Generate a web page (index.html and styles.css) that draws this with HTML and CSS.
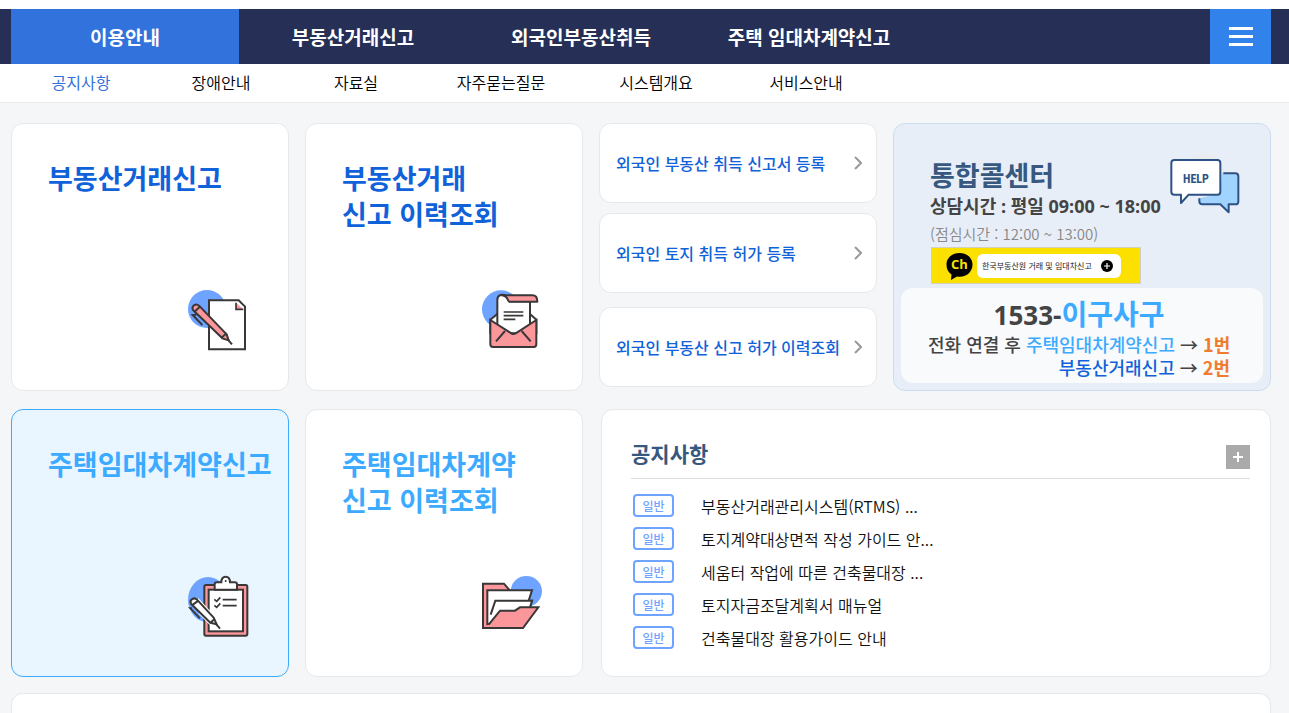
FILE: index.html
```html
<!DOCTYPE html>
<html lang="ko">
<head>
<meta charset="utf-8">
<title>부동산거래관리시스템</title>
<meta name="viewport" content="width=device-width, initial-scale=1">
<link rel="stylesheet" href="styles.css">
</head>
<body>
<div class="page">
  <header>
    <nav class="gnb">
      <ul class="gnb-list">
        <li><a class="active" href="#guide">이용안내</a></li>
        <li><a href="#deal">부동산거래신고</a></li>
        <li><a href="#foreign">외국인부동산취득</a></li>
        <li><a href="#lease">주택 임대차계약신고</a></li>
      </ul>
      <button class="menu-button" type="button" aria-label="전체메뉴"><span></span><span></span><span></span></button>
    </nav>
    <nav class="subnav">
      <ul class="subnav-list">
        <li><a class="active" href="#notice">공지사항</a></li>
        <li><a href="#trouble">장애안내</a></li>
        <li><a href="#data">자료실</a></li>
        <li><a href="#faq">자주묻는질문</a></li>
        <li><a href="#system">시스템개요</a></li>
        <li><a href="#service">서비스안내</a></li>
      </ul>
    </nav>
  </header>

  <main class="main">
    <div class="row-top">
      <a class="card tile" href="#deal-report">
        <span class="tile-title">부동산거래신고</span>
        <svg class="tile-icon" viewBox="24 30 180 180" aria-hidden="true">
          <circle cx="81" cy="87" r="57" fill="#6ea4ff"/>
          <path d="M87 61H176L195 80V208H87Z" fill="#fff" stroke="#393738" stroke-width="6"/>
          <path d="M168 68V88H190" fill="#fb969b" stroke="#393738" stroke-width="5"/>
          <path d="M39 90C33 78 47 68 57 77L140 163L146 181L127 175Z" fill="#fb969b" stroke="#393738" stroke-width="6" stroke-linejoin="round"/>
          <path d="M43 96L61 79M124 173L140 160M143 178L156 193M49 104L38 105L67 135" fill="none" stroke="#393738" stroke-width="6"/>
        </svg>
      </a>
      <a class="card tile" href="#deal-history">
        <span class="tile-title">부동산거래<br>신고 이력조회</span>
        <svg class="tile-icon" viewBox="36 30 180 180" aria-hidden="true">
          <circle cx="93" cy="88" r="57" fill="#6ea4ff"/>
          <path d="M61 119L82 102H180L199 119V160H61Z" fill="#fff" stroke="#393738" stroke-width="6"/>
          <path d="M82 160V59C82 43 99 42 109 48L118 64H180V160Z" fill="#fff" stroke="#393738" stroke-width="6"/>
          <path d="M96 46H187C197 46 202 54 202 65H118C112 65 116 48 96 46Z" fill="#fb969b" stroke="#393738" stroke-width="6" stroke-linejoin="round"/>
          <path d="M101 96H160M101 107H160M101 118H136" stroke="#393738" stroke-width="5"/>
          <path d="M61 120L124 160Q130 164 137 160L199 120V193Q199 201 191 201H69Q61 201 61 193Z" fill="#fb969b" stroke="#393738" stroke-width="6"/>
          <path d="M105 153L78 184M155 153L182 184" stroke="#393738" stroke-width="6"/>
        </svg>
      </a>
      <ul class="link-list">
        <li><a class="card link-card" href="#f1">외국인 부동산 취득 신고서 등록
          <svg viewBox="0 0 8 14" aria-hidden="true"><path d="M1 1L7 7L1 13"/></svg></a></li>
        <li><a class="card link-card" href="#f2">외국인 토지 취득 허가 등록
          <svg viewBox="0 0 8 14" aria-hidden="true"><path d="M1 1L7 7L1 13"/></svg></a></li>
        <li><a class="card link-card" href="#f3">외국인 부동산 신고 허가 이력조회
          <svg viewBox="0 0 8 14" aria-hidden="true"><path d="M1 1L7 7L1 13"/></svg></a></li>
      </ul>
      <section class="card call">
        <div class="call-head">
          <div>
            <h2>통합콜센터</h2>
            <p class="call-hours">상담시간 : 평일 09:00 ~ 18:00</p>
            <p class="call-lunch">(점심시간 : 12:00 ~ 13:00)</p>
          </div>
          <svg class="help-icon" viewBox="30 6 210 186" aria-hidden="true">
            <circle cx="136" cy="69" r="58" fill="#e9ebee"/>
            <path d="M186 70H226Q235 70 235 79V155Q235 163 226 163H206V187L181 163H127Q118 163 118 154V145L182 130Z" fill="#a1d3ff"/>
            <path d="M190 70H226Q235 70 235 79V155Q235 163 226 163H206V187L181 163H127Q118 163 118 154V145" fill="none" stroke="#2e5285" stroke-width="6" stroke-linejoin="round"/>
            <path d="M43 30H172Q181 30 181 39V125Q181 134 172 134H86L63 159V134H43Q34 134 34 125V39Q34 30 43 30Z" fill="#fff" stroke="#2e5285" stroke-width="6" stroke-linejoin="round"/>
            <text class="help-text" x="108" y="98" text-anchor="middle">HELP</text>
          </svg>
        </div>
        <a class="kakao" href="#kakao">
          <svg class="kakao-mark" viewBox="0 0 27 28" aria-hidden="true">
            <path d="M13.500 1C6 1 .5 6 .5 12.500C.5 17 2 20 5.500 22.500L5 28L11 24.500C20 26 26.500 20 26.500 12.500C26.500 6 21 1 13.500 1Z" fill="#000"/>
            <text class="kakao-ch" x="13.500" y="17" text-anchor="middle">Ch</text>
          </svg>
          <span class="kakao-pill">한국부동산원 거래 및 임대차신고
            <svg viewBox="0 0 12 12" aria-hidden="true"><circle cx="6" cy="6" r="6"/><path d="M6 3V9M3 6H9" stroke="#fff" stroke-width="1.200"/></svg>
          </span>
        </a>
        <div class="phone">
          <p class="phone-number">1533-<span>이구사구</span></p>
          <div class="phone-lines">
            <p>전화 연결 후 <span class="sky">주택임대차계약신고</span> → <span class="orange">1번</span></p>
            <p><span class="blue">부동산거래신고</span> → <span class="orange">2번</span></p>
          </div>
        </div>
      </section>
    </div>

    <div class="row-bottom">
      <div class="tile-pair">
        <a class="card tile lease selected" href="#lease-report">
          <span class="tile-title">주택임대차계약신고</span>
          <svg class="tile-icon" viewBox="24 33 180 180" aria-hidden="true">
            <ellipse cx="84" cy="104" rx="60" ry="68" fill="#6ea4ff"/>
            <rect x="73" y="60" width="129" height="152" rx="5" fill="#fb969b" stroke="#393738" stroke-width="6"/>
            <rect x="86" y="74" width="103" height="125" fill="#fff" stroke="#393738" stroke-width="6"/>
            <path d="M104 74V58Q104 52 111 52H124Q124 35 137 35Q150 35 150 52H164Q171 52 171 58V74Z" fill="#fff" stroke="#393738" stroke-width="6"/>
            <circle cx="137" cy="48" r="3" fill="#393738"/>
            <path d="M103 103L110 109L121 97M103 121L110 127L121 115M128 104H170M128 122H170" fill="none" stroke="#393738" stroke-width="5"/>
            <path d="M51 104L101 158L110 178L91 173L60 142" fill="#fff" stroke="#fff" stroke-width="12"/>
            <path d="M33 116C27 104 42 95 51 104L101 158L110 178L91 173Z" fill="#fff" stroke="#393738" stroke-width="6" stroke-linejoin="round"/>
            <path d="M36 121L55 107M91 173L104 162M107 176L120 191M36 130L31 130L60 160" fill="none" stroke="#393738" stroke-width="6"/>
          </svg>
        </a>
        <a class="card tile lease" href="#lease-history">
          <span class="tile-title">주택임대차계약<br>신고 이력조회</span>
          <svg class="tile-icon" viewBox="36 33 180 180" aria-hidden="true">
            <ellipse cx="169" cy="79" rx="47" ry="46" fill="#6ea4ff"/>
            <path d="M39 56H102L119 76V189H39Z" fill="#fb969b" stroke="#393738" stroke-width="6"/>
            <path d="M52 76H186L176 107H186L176 140L60 178H52Z" fill="#fff" stroke="#393738" stroke-width="6"/>
            <path d="M62 149L76 107H186L176 140L100 150" fill="#fff" stroke="#393738" stroke-width="6"/>
            <path d="M56 179L90 137H135L150 127H205L159 189H39" fill="#fb969b" stroke="#393738" stroke-width="6"/>
          </svg>
        </a>
      </div>
      <section class="card notice">
        <div class="notice-head">
          <h2>공지사항</h2>
          <a class="more" href="#more" aria-label="공지사항 더보기"><svg viewBox="0 0 24 24" aria-hidden="true"><path d="M12 7V17M7 12H17"/></svg></a>
        </div>
        <ul class="notice-list">
          <li><span class="badge">일반</span><a href="#n1">부동산거래관리시스템(RTMS) ...</a></li>
          <li><span class="badge">일반</span><a href="#n2">토지계약대상면적 작성 가이드 안...</a></li>
          <li><span class="badge">일반</span><a href="#n3">세움터 작업에 따른 건축물대장 ...</a></li>
          <li><span class="badge">일반</span><a href="#n4">토지자금조달계획서 매뉴얼</a></li>
          <li><span class="badge">일반</span><a href="#n5">건축물대장 활용가이드 안내</a></li>
        </ul>
      </section>
    </div>

    <section class="card next-panel"></section>
  </main>
</div>
</body>
</html>
```
FILE: styles.css
```css
* {
  box-sizing: border-box;
}

body {
  margin: 0;
  background: #f5f6f8;
  color: #000;
  font-family: "Noto Sans CJK KR", sans-serif;
  font-size: 16px;
}

h2, p, ul {
  margin: 0;
  padding: 0;
}

ul {
  list-style: none;
}

a {
  color: inherit;
  text-decoration: none;
}

svg {
  display: block;
  flex: none;
}

.page {
  display: flex;
  flex-direction: column;
  min-height: 100vh;
}

/* Navigation */
header {
  padding-top: 9px;
  background: #fff;
}

.gnb {
  display: flex;
  justify-content: space-between;
  padding: 0 18px 0 11px;
  background: #262f56;
}

.gnb-list {
  display: flex;
  flex: 0 1 912px;
}

.gnb-list li {
  flex: 1;
}

.gnb-list a {
  display: block;
  color: #fff;
  font-size: 19px;
  font-weight: 700;
  line-height: 55px;
  text-align: center;
  white-space: nowrap;
}

.gnb-list .active {
  background: #3172dc;
}

.menu-button {
  display: flex;
  flex-direction: column;
  align-items: center;
  justify-content: center;
  gap: 5px;
  width: 61px;
  padding: 0;
  border: 0;
  background: #3282eb;
}

.menu-button span {
  width: 24px;
  height: 3px;
  background: #fff;
}

.subnav {
  padding: 0 11px 2px;
  border-bottom: 1px solid #e8eaec;
}

.subnav-list {
  display: grid;
  grid-template-columns: 140px 140px 130px 160px 150px 150px;
}

.subnav-list a {
  display: block;
  font-weight: 350;
  line-height: 36px;
  text-align: center;
}

.subnav-list .active {
  color: #3172dc;
  font-weight: 400;
}

/* Cards */
.main {
  display: flex;
  flex: 1;
  flex-direction: column;
  padding: 20px 18px 0 11px;
}

.card {
  border: 1px solid #e7e8ea;
  border-radius: 12px;
  background: #fff;
}

.row-top {
  display: grid;
  grid-template-columns: minmax(0, 278fr) minmax(0, 278fr) minmax(0, 278fr) minmax(0, 378fr);
  gap: 16px;
  min-height: 268px;
}

.row-bottom {
  display: grid;
  grid-template-columns: 572fr 670fr;
  gap: 18px;
  min-height: 268px;
  margin-top: 18px;
}

.tile-pair {
  display: grid;
  grid-template-columns: 1fr 1fr;
  gap: 16px;
}

.tile {
  display: flex;
  flex-direction: column;
  justify-content: space-between;
  padding: 36px 0 40px 36px;
  color: #0f62d9;
}

.tile-title {
  font-size: 27px;
  font-weight: 700;
  line-height: 36px;
  white-space: nowrap;
}

.tile-icon {
  align-self: flex-end;
  width: 60px;
  height: 60px;
  margin-right: 40px;
  overflow: visible;
}

.lease {
  color: #3cabff;
}

.selected {
  border-color: #3cabff;
  background: #e9f6ff;
}

.link-list li + li {
  margin-top: 10px;
}

.link-list li:last-child {
  margin-top: 14px;
}

.link-card {
  display: flex;
  align-items: center;
  justify-content: space-between;
  height: 80px;
  padding: 0 14px 0 16px;
  color: #0f62d9;
  font-weight: 500;
  white-space: nowrap;
}

.link-card svg {
  width: 8px;
  height: 14px;
  fill: none;
  stroke: #999;
  stroke-width: 2;
}

/* Call centre */
.call {
  display: flex;
  flex-direction: column;
  padding: 28px 7px 7px;
  border-color: #cbdcee;
  background: #e8eef7;
}

.call-head {
  display: flex;
  justify-content: space-between;
  padding: 0 23px 0 29px;
  white-space: nowrap;
}

.call-head h2 {
  padding-top: 6px;
  color: #37587f;
  font-size: 27px;
  line-height: 34px;
}

.call-hours {
  color: #444;
  font-family: "Open Sans", "Noto Sans CJK KR", sans-serif;
  font-size: 18px;
  font-weight: 700;
  line-height: 28px;
}

.call-lunch {
  color: #888;
  font-size: 15px;
  font-weight: 350;
  line-height: 27px;
}

.help-icon {
  width: 70px;
  height: 62px;
}

.help-text {
  fill: #2e5285;
  font-family: "Liberation Sans Narrow", "Roboto Condensed", Roboto, sans-serif;
  font-size: 36px;
  font-weight: 700;
}

.kakao {
  display: flex;
  align-items: center;
  align-self: flex-start;
  gap: 4px;
  height: 37px;
  margin-left: 30px;
  padding: 0 19px 0 14px;
  border: 1px solid #d3d0c0;
  background: #fbe000;
}

.kakao-mark {
  width: 27px;
  height: 28px;
}

.kakao-ch {
  fill: #fbe000;
  font-family: "Open Sans", sans-serif;
  font-size: 13px;
  font-weight: 700;
}

.kakao-pill {
  display: flex;
  align-items: center;
  justify-content: space-between;
  width: 144px;
  height: 24px;
  padding: 0 8px 0 5px;
  border-radius: 6px;
  background: #fff;
  color: #222;
  font-size: 8px;
  white-space: nowrap;
}

.kakao-pill svg {
  width: 12px;
  height: 12px;
}

.phone {
  flex: 1;
  margin-top: 4px;
  padding: 8px 33px 4px 27px;
  border-radius: 12px;
  background: #f9fafc;
  color: #444;
  white-space: nowrap;
}

.phone-number {
  font-family: "Open Sans", "Noto Sans CJK KR", sans-serif;
  font-size: 26px;
  font-weight: 700;
  line-height: 36px;
  text-align: center;
}

.phone-number span {
  color: #3cabff;
  font-size: 28px;
}

.phone-lines {
  font-size: 18px;
  font-weight: 500;
  line-height: 23px;
  text-align: right;
}

.sky {
  color: #3cabff;
}

.blue {
  color: #0f62d9;
}

.orange {
  color: #f07c30;
  font-weight: 700;
}

/* Notices */
.notice {
  padding: 26px 20px 20px 29px;
}

.notice-head {
  display: flex;
  align-items: center;
  justify-content: space-between;
  height: 43px;
  border-bottom: 1px solid #ddd;
}

.notice-head h2 {
  align-self: flex-start;
  color: #37587f;
  font-size: 21px;
  line-height: 34px;
}

.more svg {
  width: 24px;
  height: 24px;
  background: #aaa;
  fill: none;
  stroke: #fff;
  stroke-width: 2;
}

.notice-list {
  padding: 10px 0 0 2px;
}

.notice-list li {
  display: flex;
  align-items: center;
  gap: 27px;
  height: 33px;
  color: #111;
  font-weight: 350;
}

.badge {
  width: 41px;
  border: 2px solid #6ea4ff;
  border-radius: 4px;
  color: #6ea4ff;
  font-size: 12px;
  font-weight: 500;
  line-height: 19px;
  text-align: center;
}

.next-panel {
  flex: 1;
  margin-top: 16px;
  border-bottom: 0;
  border-radius: 12px 12px 0 0;
}
```
